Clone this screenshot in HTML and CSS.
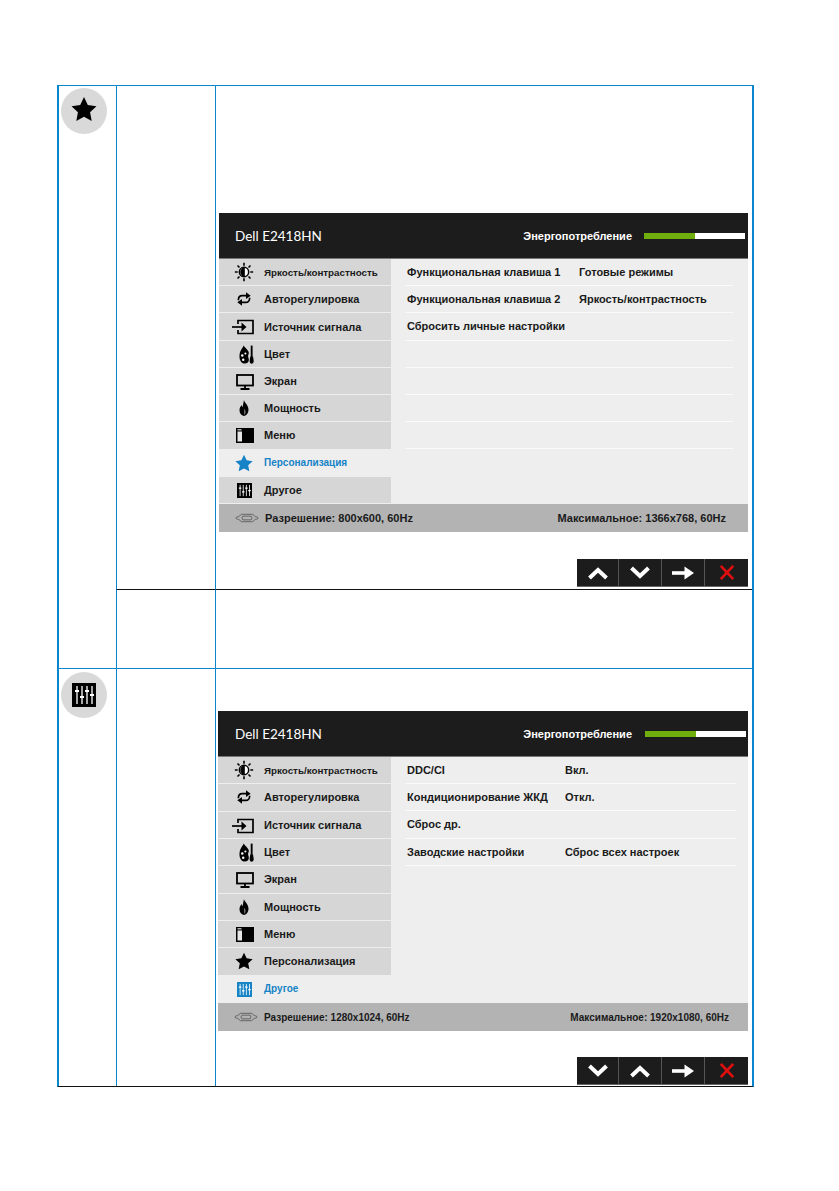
FILE: index.html
```html
<!DOCTYPE html>
<html lang="ru">
<head>
<meta charset="utf-8">
<title>Dell E2418HN</title>
<link rel="stylesheet" href="styles.css">
</head>
<body>
<svg class="defs" width="0" height="0" aria-hidden="true">
  <symbol id="i-sun" viewBox="0 0 24 24">
    <circle cx="12" cy="12" r="5.600" fill="#fff" stroke="#000" stroke-width="1.800"/>
    <path d="M13 6.400a5.600 5.600 0 0 0 0 11.200z" fill="#000"/>
    <path d="M12 1v3.600M12 19.400V23M1 12h3.400M19.600 12H23M4.200 4.200l2.400 2.400M17.400 17.400l2.400 2.400M4.200 19.800l2.400-2.400M17.400 6.600l2.400-2.400" stroke="#000" stroke-width="1.900" fill="none"/>
  </symbol>
  <symbol id="i-sync" viewBox="0 0 24 24">
    <path d="M3.500 14c0-5 2.500-7 6-7h7" stroke="#000" stroke-width="2.400" fill="none"/>
    <path d="M15 2l7 5-7 5z" fill="#000"/>
    <path d="M20.500 10c0 5-2.500 7-6 7h-7" stroke="#000" stroke-width="2.400" fill="none"/>
    <path d="M9 12l-7 5 7 5z" fill="#000"/>
  </symbol>
  <symbol id="i-input" viewBox="0 0 22 16">
    <path d="M6 5V1.500h15v13H6V11" stroke="#000" stroke-width="1.700" fill="none"/>
    <path d="M0 8h11" stroke="#000" stroke-width="1.700"/>
    <path d="M9.500 3.500l5 4.500-5 4.500z" fill="#000"/>
  </symbol>
  <symbol id="i-color" viewBox="0 0 16 20">
    <path d="M5 .5C4 3 .5 6 .5 12c0 4.500 2.500 7.500 5.500 7.500s4.500-1.500 4.500-4c0-1.500-.8-2.500-.8-4 0-1.200.8-1.800.8-3C10.500 5.500 6.500 3.500 5 .5z" fill="#000"/>
    <circle cx="3.500" cy="11" r="1.300" fill="#fff"/><circle cx="6.800" cy="9" r="1.100" fill="#fff"/><circle cx="4.500" cy="15.500" r="1.300" fill="#fff"/>
    <path d="M13.500 .5v12" stroke="#000" stroke-width="2"/>
    <path d="M12 12h3l.7 5c0 1.800-1 2.800-2.200 2.800s-2.200-1-2.200-2.800z" fill="#000"/>
  </symbol>
  <symbol id="i-screen" viewBox="0 0 18 16">
    <rect x="1" y="1" width="16" height="10.500" fill="none" stroke="#000" stroke-width="1.800"/>
    <path d="M9 11.500v3M4.500 15h9" stroke="#000" stroke-width="1.800"/>
  </symbol>
  <symbol id="i-flame" viewBox="0 0 10 16">
    <path d="M5 0c.3 2.500 4.500 5 4.500 9.500 0 3.500-2 6-4.500 6.500C2 15.500.5 13 .5 10c0-2 1-3.500 2-5 .3 1 .6 1.600 1.200 2C4 5 4.500 2 5 0z" fill="#000"/>
    <path d="M5 8.500c1 1.500 2 2.500 1.500 4.500-.3 1-.9 1.600-1.500 1.800z" fill="#6a6a6a"/>
  </symbol>
  <symbol id="i-menu" viewBox="0 0 18 15">
    <rect width="18" height="15" fill="#000"/>
    <rect x="1.500" y="3.500" width="4.500" height="10" fill="#e6e6e6"/>
    <rect x="1.500" y="1.200" width="4" height="1.200" fill="#ddd"/>
  </symbol>
  <symbol id="i-star" viewBox="0 0 24 24">
    <path d="M12 1l3.500 7.400 8 1.100-5.900 5.600 1.500 8-7.100-3.900-7.100 3.900 1.500-8L.5 9.500l8-1.100z" fill="currentColor"/>
  </symbol>
  <symbol id="i-sliders" viewBox="0 0 24 24">
    <rect width="24" height="24" fill="currentColor"/>
    <path d="M5 3v18M10 3v18M15 3v18M20 3v18" stroke="#fff" stroke-width="1.300"/>
    <path d="M3 8h4M8 14h4M13 8h4M18 12h4" stroke="#fff" stroke-width="2"/>
  </symbol>
  <symbol id="i-vga" viewBox="0 0 26 10">
    <path d="M1 5c0-1 2-1.500 3-1.500L7 1h12l3 2.500c1 0 3 .5 3 1.500s-2 1.500-3 1.500L19 9H7L4 6.500C3 6.500 1 6 1 5z" fill="none" stroke="#555" stroke-width=".9"/>
    <path d="M8.500 3h9l1 2-1 2h-9l-1-2z" fill="none" stroke="#555" stroke-width=".9"/>
  </symbol>
  <symbol id="i-up" viewBox="0 0 24 16"><path d="M3.500 13L12 5l8.500 8" fill="none" stroke="#fff" stroke-width="4"/></symbol>
  <symbol id="i-down" viewBox="0 0 24 16"><path d="M3.500 3L12 11l8.500-8" fill="none" stroke="#fff" stroke-width="4"/></symbol>
  <symbol id="i-right" viewBox="0 0 24 16"><path d="M1 8h14" stroke="#fff" stroke-width="3.600"/><path d="M13.500 1.500L23 8l-9.500 6.500z" fill="#fff"/></symbol>
  <symbol id="i-close" viewBox="0 0 18 18"><path d="M2 1.500l14 15M16 1.500l-14 15" stroke="#e00f0f" stroke-width="3" fill="none"/></symbol>
</svg>

<main class="doc">
  <section class="section section-a">
    <div class="icon-cell span-two"><div class="badge"><svg class="badge-star"><use href="#i-star"/></svg></div></div>
    <div class="label-cell line-dark"></div>
    <div class="body-cell body-a line-dark">
      <div class="osd osd-a">
        <header class="osd-head">
          <span class="osd-title">Dell E2418HN</span>
          <span class="osd-power">Энергопотребление</span>
          <span class="meter"><span class="meter-fill"></span></span>
        </header>
        <div class="osd-main">
          <ul class="side">
            <li class="side-item"><svg class="ic ic-sun"><use href="#i-sun"/></svg><span class="small">Яркость/контрастность</span></li>
            <li class="side-item"><svg class="ic ic-sync"><use href="#i-sync"/></svg><span>Авторегулировка</span></li>
            <li class="side-item"><svg class="ic ic-input"><use href="#i-input"/></svg><span>Источник сигнала</span></li>
            <li class="side-item"><svg class="ic ic-color"><use href="#i-color"/></svg><span>Цвет</span></li>
            <li class="side-item"><svg class="ic ic-screen"><use href="#i-screen"/></svg><span>Экран</span></li>
            <li class="side-item"><svg class="ic ic-flame"><use href="#i-flame"/></svg><span>Мощность</span></li>
            <li class="side-item"><svg class="ic ic-menu"><use href="#i-menu"/></svg><span>Меню</span></li>
            <li class="side-item is-active"><svg class="ic ic-star"><use href="#i-star"/></svg><span class="small">Персонализация</span></li>
            <li class="side-item"><svg class="ic ic-sliders"><use href="#i-sliders"/></svg><span>Другое</span></li>
          </ul>
          <div class="panel">
            <div class="row"><span class="key">Функциональная клавиша 1</span><span>Готовые режимы</span></div>
            <div class="row"><span class="key">Функциональная клавиша 2</span><span>Яркость/контрастность</span></div>
            <div class="row"><span class="key">Сбросить личные настройки</span></div>
            <div class="row"></div><div class="row"></div><div class="row"></div><div class="row"></div>
          </div>
        </div>
        <footer class="osd-foot">
          <svg class="vga"><use href="#i-vga"/></svg>
          <span class="res">Разрешение: 800x600, 60Hz</span>
          <span class="max">Максимальное: 1366x768, 60Hz</span>
        </footer>
      </div>
      <div class="keys keys-a">
        <span class="key-btn"><svg class="glyph"><use href="#i-up"/></svg></span>
        <span class="key-btn"><svg class="glyph"><use href="#i-down"/></svg></span>
        <span class="key-btn"><svg class="glyph"><use href="#i-right"/></svg></span>
        <span class="key-btn"><svg class="glyph-x"><use href="#i-close"/></svg></span>
      </div>
    </div>
    <div class="label-cell"></div>
    <div class="body-cell"></div>
  </section>

  <section class="section section-b">
    <div class="icon-cell"><div class="badge"><svg class="badge-sliders"><use href="#i-sliders"/></svg></div></div>
    <div class="label-cell"></div>
    <div class="body-cell body-b">
      <div class="osd osd-b">
        <header class="osd-head">
          <span class="osd-title">Dell E2418HN</span>
          <span class="osd-power">Энергопотребление</span>
          <span class="meter"><span class="meter-fill"></span></span>
        </header>
        <div class="osd-main">
          <ul class="side">
            <li class="side-item"><svg class="ic ic-sun"><use href="#i-sun"/></svg><span class="small">Яркость/контрастность</span></li>
            <li class="side-item"><svg class="ic ic-sync"><use href="#i-sync"/></svg><span>Авторегулировка</span></li>
            <li class="side-item"><svg class="ic ic-input"><use href="#i-input"/></svg><span>Источник сигнала</span></li>
            <li class="side-item"><svg class="ic ic-color"><use href="#i-color"/></svg><span>Цвет</span></li>
            <li class="side-item"><svg class="ic ic-screen"><use href="#i-screen"/></svg><span>Экран</span></li>
            <li class="side-item"><svg class="ic ic-flame"><use href="#i-flame"/></svg><span>Мощность</span></li>
            <li class="side-item"><svg class="ic ic-menu"><use href="#i-menu"/></svg><span>Меню</span></li>
            <li class="side-item"><svg class="ic ic-star"><use href="#i-star"/></svg><span>Персонализация</span></li>
            <li class="side-item is-active"><svg class="ic ic-sliders"><use href="#i-sliders"/></svg><span class="small">Другое</span></li>
          </ul>
          <div class="panel">
            <div class="row"><span class="key">DDC/CI</span><span>Вкл.</span></div>
            <div class="row"><span class="key">Кондиционирование ЖКД</span><span>Откл.</span></div>
            <div class="row"><span class="key">Сброс др.</span></div>
            <div class="row"><span class="key">Заводские настройки</span><span>Сброс всех настроек</span></div>
          </div>
        </div>
        <footer class="osd-foot">
          <svg class="vga"><use href="#i-vga"/></svg>
          <span class="res">Разрешение: 1280x1024, 60Hz</span>
          <span class="max">Максимальное: 1920x1080, 60Hz</span>
        </footer>
      </div>
      <div class="keys keys-b">
        <span class="key-btn"><svg class="glyph"><use href="#i-down"/></svg></span>
        <span class="key-btn"><svg class="glyph"><use href="#i-up"/></svg></span>
        <span class="key-btn"><svg class="glyph"><use href="#i-right"/></svg></span>
        <span class="key-btn"><svg class="glyph-x"><use href="#i-close"/></svg></span>
      </div>
    </div>
  </section>
</main>
</body>
</html>
```

FILE: styles.css
```css
* { box-sizing: border-box; }
html, body { margin: 0; padding: 0; background: #fff; }
body { font-family: "Liberation Sans", Arial, sans-serif; color: #111; }
.defs { display: block; height: 0; }

.doc {
  width: 697px;
  height: 1002px;
  margin: 85px 0 0 57px;
  border-left: 2px solid #0a87cc;
  border-right: 2px solid #0a87cc;
  border-top: 1px solid #0a87cc;
  border-bottom: 1px solid #111;
}
.section { display: grid; grid-template-columns: 57px 99px 1fr; }
.section-a { grid-template-rows: 504px 78px; }
.section-b { grid-template-rows: 417px; border-top: 1px solid #0a87cc; }
.span-two { grid-row: span 2; }
.icon-cell { padding: 2px 0 0 2px; }
.section-b .icon-cell { padding-top: 3px; }
.label-cell, .body-cell { border-left: 1px solid #0a87cc; }
.line-dark { border-bottom: 1px solid #111; }

.badge {
  width: 46px; height: 46px; border-radius: 50%;
  background: #d9d9d9;
  display: flex; align-items: center; justify-content: center;
}
.badge-star { width: 26px; height: 26px; color: #000; margin-top: -4px; }
.badge-sliders { width: 24px; height: 24px; color: #000; }

.body-a { padding: 127px 4px 0 3px; }
.body-b { padding: 42px 4px 0 2px; }

.osd { background: #eee; }
.osd-head {
  height: 46px;
  background: #1c1c1c;
  border-bottom: 1px solid #777;
  display: flex; align-items: center;
  padding: 0 3px 0 16px;
  color: #fff;
}
.osd-b .osd-head { padding: 0 2px 0 17px; }
.osd-title { font-family: Lato, sans-serif; font-weight: 400; font-size: 13.500px; flex: 1; }
.osd-power { font-size: 11px; font-weight: bold; margin-right: 12px; }
.osd-b .osd-power { margin-right: 13px; }
.meter { width: 101px; height: 6px; background: #fff; display: block; margin-top: 1px; }
.meter-fill { display: block; width: 51px; height: 6px; background: #6fae0c; }

.osd-main { display: grid; grid-template-columns: 172px 1fr; height: 245px; }
.osd-b .osd-main { grid-template-columns: 173px 1fr; height: 246px; }
.side { list-style: none; margin: 0; padding: 0; display: grid; grid-template-rows: repeat(9, 1fr); }
.side-item {
  display: flex; align-items: center;
  background: #d6d6d6;
  border-bottom: 1px solid #eee;
  font-size: 11px; font-weight: bold;
  color: #1a1a1a;
  padding-left: 45px;
  position: relative;
}
.osd-b .side-item { padding-left: 46px; }
.side-item .small { font-size: 9.800px; }
.side-item.is-active { background: #eee; color: #1583c6; }
.side-item.is-active .small { font-size: 10px; }

.ic { position: absolute; color: #000; }
.is-active .ic { color: #1583c6; }
.osd-b .ic { margin-left: 1px; }
.ic-sun { left: 15px; top: 3px; width: 20px; height: 20px; }
.ic-sync { left: 17px; top: 5px; width: 16px; height: 16px; }
.ic-input { left: 13px; top: 6px; width: 22px; height: 16px; }
.ic-color { left: 20px; top: 4px; width: 15px; height: 19px; }
.ic-screen { left: 17px; top: 6px; width: 18px; height: 16px; }
.ic-flame { left: 20px; top: 5px; width: 10px; height: 16px; }
.ic-menu { left: 17px; top: 6px; width: 18px; height: 15px; }
.ic-star { left: 16px; top: 4px; width: 18px; height: 18px; }
.ic-sliders { left: 18px; top: 6px; width: 15px; height: 15px; }

.panel { display: flex; flex-direction: column; padding: 0 15px 0 14px; }
.osd-b .panel { padding: 0 12px 0 14px; }
.row {
  height: 27.200px;
  border-bottom: 1px solid #fafafa;
  display: flex; align-items: center;
  padding-left: 2px;
  font-size: 11px; font-weight: bold; color: #1a1a1a;
  white-space: nowrap;
}
.osd-a .key { width: 172px; }
.osd-b .key { width: 158px; }

.osd-foot {
  height: 28px; background: #b3b3b3;
  display: flex; align-items: center;
  font-weight: bold; color: #1a1a1a;
  padding-left: 16px;
}
.osd-a .osd-foot { font-size: 11px; }
.osd-b .osd-foot { font-size: 10px; }
.vga { width: 24px; height: 10px; margin-right: 6px; }
.max { margin-left: auto; }
.osd-a .max { margin-right: 22px; }
.osd-b .max { margin-right: 19px; }

.keys { display: flex; justify-content: flex-end; }
.keys-a { margin-top: 27px; }
.keys-b { margin-top: 26px; }
.key-btn {
  width: 43px; height: 28px;
  background: #1c1c1c;
  border-right: 1px solid #555;
  border-bottom: 1px solid #666;
  display: flex; align-items: center; justify-content: center;
}
.key-btn:first-child { width: 42px; }
.key-btn:last-child { border-right: 0; }
.glyph { width: 24px; height: 16px; }
.glyph-x { width: 16px; height: 17px; }
```
